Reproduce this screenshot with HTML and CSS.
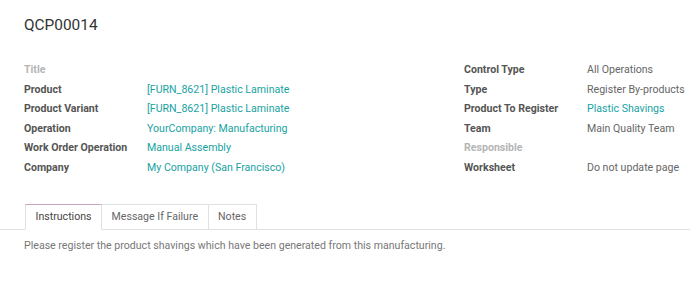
FILE: index.html
```html
<!DOCTYPE html>
<html lang="en">
<head>
  <meta charset="UTF-8">
  <title>QCP00014</title>
  <link rel="stylesheet" href="styles.css">
</head>
<body>

  <div class="sheet">
    <h1 class="record-name">QCP00014</h1>

    <div class="groups">
      <div class="group">
        <div class="label muted">Title</div><div class="value"></div>
        <div class="label">Product</div><div class="value link">[FURN_8621] Plastic Laminate</div>
        <div class="label">Product Variant</div><div class="value link">[FURN_8621] Plastic Laminate</div>
        <div class="label">Operation</div><div class="value link">YourCompany: Manufacturing</div>
        <div class="label">Work Order Operation</div><div class="value link">Manual Assembly</div>
        <div class="label">Company</div><div class="value link">My Company (San Francisco)</div>
      </div>
      <div class="group">
        <div class="label">Control Type</div><div class="value">All Operations</div>
        <div class="label">Type</div><div class="value">Register By-products</div>
        <div class="label">Product To Register</div><div class="value link">Plastic Shavings</div>
        <div class="label">Team</div><div class="value">Main Quality Team</div>
        <div class="label muted">Responsible</div><div class="value"></div>
        <div class="label">Worksheet</div><div class="value">Do not update page</div>
      </div>
    </div>
  </div>

  <div class="tabs">
    <div class="tab active">Instructions</div>
    <div class="tab">Message If Failure</div>
    <div class="tab">Notes</div>
  </div>

  <p class="tab-content">Please register the product shavings which have been generated from this manufacturing.</p>

</body>
</html>
```

FILE: styles.css
```css
* { box-sizing: border-box; }

body {
  margin: 0;
  padding: 0;
  background: #fff;
  font-family: Roboto, 'Liberation Sans', sans-serif;
  font-size: 10.6px;
  color: #4c4c4c;
}

.sheet {
  padding: 15px 0 0 24px;
}

.record-name {
  margin: 0;
  font-size: 15.4px;
  font-weight: 400;
  line-height: 21px;
  color: #333;
}

.groups {
  display: flex;
  margin-top: 24px;
}

.group {
  display: grid;
  grid-template-columns: 123px auto;
  grid-auto-rows: 19.5px;
  align-items: center;
}

.group:first-child {
  width: 440px;
}

.label {
  font-weight: 700;
  color: #555;
}

.label.muted {
  color: #b5b5b5;
}

.value {
  color: #666;
}

.value.link {
  color: #17a2a2;
}

.tabs {
  display: flex;
  margin-top: 27px;
  padding-left: 25px;
  border-bottom: 1px solid #dee2e6;
}

.tab {
  height: 26px;
  line-height: 24px;
  padding: 0 9.5px;
  margin-bottom: -1px;
  border: 1px solid #dee2e6;
  border-left: none;
  color: #666;
  background: #fff;
}

.tab:first-child {
  border-left: 1px solid #dee2e6;
}

.tab.active {
  color: #444;
  border-top-color: #c8a6bd;
  border-bottom-color: #fff;
}

.tab-content {
  margin: 9px 0 0 24px;
  color: #777;
}
```
